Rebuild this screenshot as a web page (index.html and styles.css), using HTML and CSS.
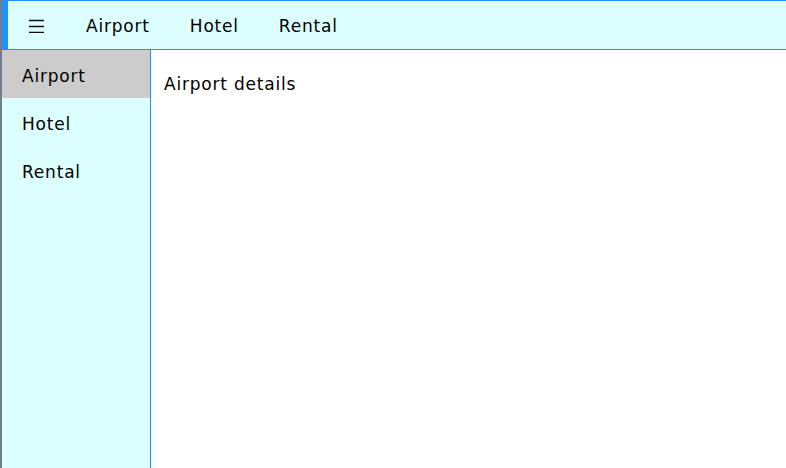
FILE: index.html
```html
<!DOCTYPE html>
<html>
<head>
<meta charset="utf-8">
<link rel="stylesheet" href="styles.css">
</head>
<body>
<div class="app">
  <header class="topbar">
    <span class="burger"><svg width="15" height="14" viewBox="0 0 15 14"><path d="M0 1.5H15M0 7.5H15M0 13.5H15" stroke="#111" stroke-width="1.4"/></svg></span>
    <nav class="topnav">
      <a class="toplink">Airport</a>
      <a class="toplink">Hotel</a>
      <a class="toplink">Rental</a>
    </nav>
  </header>
  <div class="main">
    <aside class="sidebar">
      <a class="sidelink active">Airport</a>
      <a class="sidelink">Hotel</a>
      <a class="sidelink">Rental</a>
    </aside>
    <section class="content">
      <p class="details">Airport details</p>
    </section>
  </div>
</div>
</body>
</html>
```
FILE: styles.css
```css
html, body {
  margin: 0;
  padding: 0;
  height: 100%;
}
body {
  font-family: "DejaVu Sans", Verdana, sans-serif;
  font-size: 17px;
  letter-spacing: 0.8px;
  color: #000;
  background: #fff;
}
.app {
  height: 100%;
  display: flex;
  flex-direction: column;
  border-left: 2px solid #6f7f8f;
  box-sizing: border-box;
}
.topbar {
  height: 50px;
  box-sizing: border-box;
  background: #dcffff;
  border-top: 1px solid #1e90ff;
  border-bottom: 1px solid #1e90ff;
  border-left: 6px solid #1e90ff;
  display: flex;
  align-items: center;
  padding-top: 2px;
  flex-shrink: 0;
}
.burger {
  width: 58px;
  display: flex;
  justify-content: center;
  align-items: center;
  margin-left: -1px;
  margin-right: 1px;
}
.burger svg {
  display: block;
}
.topnav {
  display: flex;
}
.toplink {
  padding: 0 20px;
}
.main {
  flex: 1;
  display: flex;
}
.sidebar {
  width: 148px;
  background: #dcffff;
  border-right: 1px solid #1e90ff;
  display: flex;
  flex-direction: column;
}
.sidelink {
  height: 48px;
  box-sizing: border-box;
  padding-top: 4px;
  line-height: 44px;
  padding-left: 20px;
}
.sidelink.active {
  background: #cccccc;
}
.content {
  flex: 1;
  padding: 0 13px;
}
.details {
  margin: 24px 0 0;
}
```
